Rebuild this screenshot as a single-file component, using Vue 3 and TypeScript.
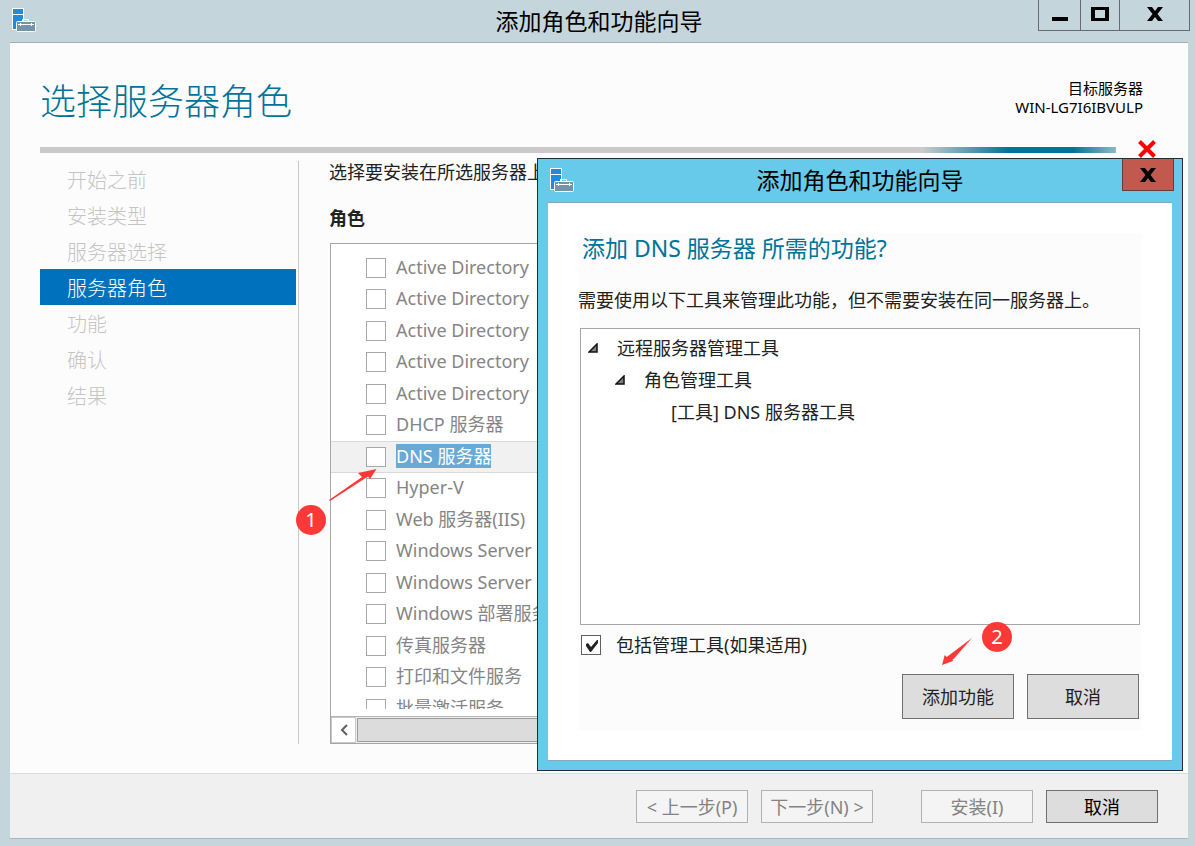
<script setup lang="ts">
import { ref } from 'vue'

interface Role {
  name: string
  checked: boolean
}

const wizardTitle = '添加角色和功能向导'

const steps: string[] = ['开始之前', '安装类型', '服务器选择', '服务器角色', '功能', '确认', '结果']
const currentStep = ref(3)

const roles = ref<Role[]>(
  [
    'Active Directory',
    'Active Directory',
    'Active Directory',
    'Active Directory',
    'Active Directory',
    'DHCP 服务器',
    'DNS 服务器',
    'Hyper-V',
    'Web 服务器(IIS)',
    'Windows Server',
    'Windows Server',
    'Windows 部署服务',
    '传真服务器',
    '打印和文件服务',
    '批量激活服务',
  ].map((name) => ({ name, checked: false })),
)
const selectedRole = ref(6)
const includeTools = ref(true)
</script>

<template>
  <div class="window">
    <header class="titlebar">
      <svg class="app-icon" width="26" height="26" viewBox="0 0 26 26" aria-hidden="true">
        <rect x="1.5" y="1.5" width="11" height="21" fill="#1f8cdb" stroke="#fff" />
        <path d="M2 7.5h10" stroke="#fff" />
        <path d="M11.5 14v-1.500h6V14" fill="none" stroke="#fff" />
        <rect x="5.500" y="14.500" width="19" height="10" rx="1" fill="#7293a8" stroke="#fff" />
        <path d="M7 17.500h16M9.500 16v3M20.500 16v3" stroke="#fff" />
      </svg>
      <h1 class="title">{{ wizardTitle }}</h1>
      <div class="controls">
        <button class="control minimize" type="button" aria-label="最小化">
          <svg width="18" height="16" viewBox="0 0 18 16"><path d="M1 11h16v4H1z" /></svg>
        </button>
        <button class="control" type="button" aria-label="最大化">
          <svg width="18" height="16" viewBox="0 0 18 16">
            <path fill-rule="evenodd" d="M0 1h18v14H0zM4 4v8h10V4z" />
          </svg>
        </button>
        <button class="control wide" type="button" aria-label="关闭">
          <svg width="18" height="16" viewBox="0 0 18 16">
            <path d="M1 1h5l3 4 3-4h5l-5.500 7 5.500 7h-5l-3-4-3 4H1l5.500-7z" />
          </svg>
        </button>
      </div>
    </header>

    <main class="page">
      <div class="page-head">
        <h2 class="page-title">选择服务器角色</h2>
        <p class="target">目标服务器<br />WIN-LG7I6IBVULP</p>
      </div>
      <div class="rule"></div>

      <div class="columns">
        <nav class="steps">
          <button
            v-for="(step, i) in steps"
            :key="step"
            type="button"
            class="step"
            :class="{ active: i === currentStep }"
          >
            {{ step }}
          </button>
        </nav>

        <section class="content">
          <p class="intro">选择要安装在所选服务器上</p>
          <h3 class="label">角色</h3>
          <div class="list">
            <div class="viewport">
              <ul class="roles">
                <li
                  v-for="(role, i) in roles"
                  :key="i"
                  class="role"
                  :class="{ selected: i === selectedRole }"
                >
                  <label class="role-label">
                    <input v-model="role.checked" class="box" type="checkbox" />
                    <span class="role-name">{{ role.name }}</span>
                  </label>
                </li>
              </ul>
            </div>
            <div class="scrollbar">
              <button class="scroll-button" type="button" aria-label="向左滚动">
                <svg width="10" height="12" viewBox="0 0 10 12">
                  <path d="M8 1L3 6l5 5" fill="none" stroke="#606060" stroke-width="2" />
                </svg>
              </button>
              <div class="thumb"></div>
            </div>
          </div>
        </section>
      </div>
    </main>

    <footer class="footer">
      <button class="button" type="button" disabled>&lt; 上一步(P)</button>
      <button class="button" type="button" disabled>下一步(N) &gt;</button>
      <button class="button apart" type="button" disabled>安装(I)</button>
      <button class="button" type="button">取消</button>
    </footer>

    <div class="dialog" role="dialog" :aria-label="wizardTitle">
      <header class="dialog-bar">
        <svg class="dialog-icon" width="26" height="26" viewBox="0 0 26 26" aria-hidden="true">
          <rect x="1.5" y="1.5" width="11" height="21" fill="#1f8cdb" stroke="#fff" />
          <path d="M2 7.5h10" stroke="#fff" />
          <path d="M11.5 14v-1.500h6V14" fill="none" stroke="#fff" />
          <rect x="5.500" y="14.500" width="19" height="10" rx="1" fill="#7293a8" stroke="#fff" />
          <path d="M7 17.500h16M9.500 16v3M20.500 16v3" stroke="#fff" />
        </svg>
        <h2 class="title">{{ wizardTitle }}</h2>
        <button class="dialog-close" type="button" aria-label="关闭">
          <svg width="18" height="16" viewBox="0 0 18 16">
            <path d="M1 1h5l3 4 3-4h5l-5.500 7 5.500 7h-5l-3-4-3 4H1l5.500-7z" />
          </svg>
        </button>
      </header>
      <div class="dialog-body">
        <div class="panel">
          <h3 class="question">添加 DNS 服务器 所需的功能?</h3>
          <p class="note">需要使用以下工具来管理此功能，但不需要安装在同一服务器上。</p>
          <ul class="tree">
            <li class="node">
              <svg class="expander" width="10" height="10" viewBox="0 0 10 10">
                <path d="M9 1v8H1z" fill="#808080" stroke="#111" stroke-width="1.500" />
              </svg>
              远程服务器管理工具
            </li>
            <li class="node level-2">
              <svg class="expander" width="10" height="10" viewBox="0 0 10 10">
                <path d="M9 1v8H1z" fill="#808080" stroke="#111" stroke-width="1.500" />
              </svg>
              角色管理工具
            </li>
            <li class="node level-3">[工具] DNS 服务器工具</li>
          </ul>
          <label class="include">
            <input v-model="includeTools" class="box dark" type="checkbox" />
            包括管理工具(如果适用)
          </label>
          <div class="actions">
            <button class="button tall" type="button">添加功能</button>
            <button class="button tall" type="button">取消</button>
          </div>
        </div>
      </div>
    </div>

    <svg class="mark cross" width="18" height="18" viewBox="0 0 18 18" aria-hidden="true">
      <path d="M1.500 1.500l15 15M16.500 1.500l-15 15" stroke="#fe0000" stroke-width="4" />
    </svg>
    <svg class="mark arrow-one" width="48" height="34" viewBox="0 0 48 34" aria-hidden="true">
      <path d="M0 31L33 8l-4-4L47.500 0l-6.500 10-2-2.500L1 32z" fill="#fd3937" />
    </svg>
    <span class="mark badge one">1</span>
    <svg class="mark arrow-two" width="30" height="28" viewBox="0 0 30 28" aria-hidden="true">
      <path d="M30 0L12 20.500l-1.500 1 .5 1.500L0 27l2.700-10 2 2z" fill="#fd3937" />
    </svg>
    <span class="mark badge two">2</span>
  </div>
</template>

<style>
body {
  margin: 0;
}
</style>

<style scoped>
.window {
  position: relative;
  display: flex;
  flex-direction: column;
  box-sizing: border-box;
  min-height: 100vh;
  padding: 0 7px 7px 10px;
  background: #c4d6dc;
  color: #222;
  font-family: 'Noto Sans', 'Noto Sans CJK SC', sans-serif;
  font-size: 18px;
  line-height: 24px;
}
h1,
h2,
h3,
p,
ul {
  margin: 0;
  padding: 0;
  font-weight: 400;
}
ul {
  list-style: none;
}
button {
  padding: 0;
  font: inherit;
  color: inherit;
}
svg {
  display: block;
}

/* Title bars */
.titlebar {
  position: relative;
  display: flex;
  justify-content: center;
  height: 42px;
  border-bottom: 1px solid #a9a9b8;
}
.title {
  font-size: 23px;
  line-height: 42px;
  color: #000;
}
.app-icon {
  position: absolute;
  left: 1px;
  top: 7px;
}
.controls {
  position: absolute;
  right: -2px;
  top: 0;
  display: flex;
}
.control {
  display: flex;
  justify-content: center;
  align-items: flex-start;
  box-sizing: border-box;
  width: 39px;
  height: 31px;
  padding-top: 6px;
  border: solid #696976;
  border-width: 0 0 1px 1px;
  background: none;
}
.control.minimize {
  width: 42px;
}
.control.wide {
  width: 71px;
  border-right-width: 1px;
}

/* Page */
.page {
  display: flex;
  flex: 1;
  flex-direction: column;
  padding: 0 0 29px 30px;
  background: #fcfcfc;
}
.page-head {
  display: flex;
  justify-content: space-between;
  align-items: flex-start;
  height: 104px;
  padding-right: 45px;
}
.page-title {
  padding-top: 35px;
  font-size: 36px;
  font-weight: 300;
  line-height: 48px;
  color: #00739a;
}
.target {
  padding-top: 36px;
  font-size: 15px;
  line-height: 19px;
  color: #000;
  text-align: right;
}
.rule {
  height: 6px;
  margin-right: 72px;
  background: linear-gradient(90deg, #cacaca 82%, #00739a 90%, #00739a 96%, #8fb9c5 100%);
}
.columns {
  display: flex;
  flex: 1;
  padding-top: 8px;
}
.steps {
  width: 256px;
  padding-right: 2px;
  border-right: 1px solid #c8c8c8;
}
.step {
  display: block;
  box-sizing: border-box;
  width: 256px;
  height: 36px;
  padding: 3px 0 0 27px;
  border: 0;
  background: none;
  color: #c4c4c4;
  font-size: 20px;
  font-weight: 300;
  text-align: left;
}
.step.active {
  background: #0072bd;
  color: #fff;
}
.content {
  display: flex;
  flex: 1;
  flex-direction: column;
  padding: 0 42px 0 31px;
}
.intro {
  margin: -1px 0 22px -1px;
}
.label {
  margin: 0 0 13px -1px;
  font-size: 18px;
  font-weight: 700;
}
.list {
  display: flex;
  flex: 1;
  flex-direction: column;
  border: 1px solid #a6a6a6;
  background: #fff;
}
.viewport {
  height: 457px;
  margin: 8px 0 7px;
  overflow: hidden;
}
.roles {
  display: grid;
  grid-template-rows: repeat(16, 1fr);
  height: 504px;
}
.role {
  display: flex;
  align-items: center;
  box-sizing: border-box;
  padding-left: 35px;
  border: solid transparent;
  border-width: 1px 0;
  color: #858585;
}
.role.selected {
  border-color: #dadada;
  background: #f1f1f1;
}
.role-label {
  display: flex;
  align-items: center;
  gap: 10px;
}
.role-name {
  margin-bottom: 2px;
}
.selected .role-name {
  background: #69a9d6;
  color: #fff;
}
.box {
  box-sizing: border-box;
  width: 20px;
  height: 20px;
  margin: 0;
  border: 1px solid #a8a8a8;
  background: #fff;
  appearance: none;
}
.box.dark {
  border-color: #606060;
}
.box.dark:checked {
  background: #fff
    url("data:image/svg+xml,%3Csvg xmlns='http://www.w3.org/2000/svg' viewBox='0 0 18 18'%3E%3Cpath d='M4 8l2-1 3 4 6-7h1v3L9 16H8L4 10z' fill='%23222'/%3E%3C/svg%3E");
}
.scrollbar {
  display: flex;
  flex: 1;
  border-top: 1px solid #b4b4b4;
  background: #f0f0f0;
}
.scroll-button {
  display: flex;
  justify-content: center;
  align-items: center;
  width: 25px;
  border: 1px solid #c8c8c8;
  background: #fff;
}
.thumb {
  flex: 1;
  margin: 1px;
  border: 1px solid #9c9c9c;
  background: #dcdcdc;
}

/* Footer */
.footer {
  display: flex;
  justify-content: flex-end;
  gap: 13px;
  padding: 16px 30px 15px;
  border-top: 1px solid #dcdcdc;
  border-bottom: 1px solid #aab6c0;
  background: #f0f0f0;
  color: #000;
}
.button {
  width: 112px;
  height: 33px;
  border: 1px solid #707070;
  background: #dddddd;
  white-space: nowrap;
}
.button:disabled {
  border-color: #adb2b5;
  background: #f4f4f4;
  color: #838383;
}
.button.apart {
  margin-left: 35px;
}
.button.tall {
  height: 45px;
}

/* Dialog over the wizard page */
.dialog {
  position: absolute;
  left: 537px;
  right: 12px;
  top: 158px;
  box-sizing: border-box;
  padding: 0 10px 9px;
  border: 1px solid #222d33;
  background: #67caea;
}
.dialog-bar {
  position: relative;
  display: flex;
  justify-content: center;
  height: 43px;
}
.dialog-icon {
  position: absolute;
  left: 1px;
  top: 8px;
}
.dialog-close {
  position: absolute;
  right: -2px;
  top: 0;
  display: flex;
  justify-content: center;
  align-items: center;
  box-sizing: border-box;
  width: 52px;
  height: 32px;
  border: 1px solid #6c3b38;
  border-top: 0;
  background: #c2594f;
}
.dialog-body {
  padding: 30px;
  border: solid #86a9bd;
  border-width: 1px 0;
  background: #fff;
}
.panel {
  padding-bottom: 11px;
  background: #fcfcfc;
}
.question {
  padding-left: 4px;
  font-size: 23px;
  line-height: 30px;
  color: #00739a;
}
.note {
  padding: 25px 0 16px;
  white-space: nowrap;
}
.tree {
  box-sizing: border-box;
  height: 297px;
  margin: 0 2px;
  padding-top: 3px;
  border: 1px solid #a6a6a6;
  background: #fff;
}
.node {
  display: flex;
  align-items: center;
  gap: 19px;
  height: 32px;
  padding-left: 7px;
}
.node.level-2 {
  padding-left: 34px;
}
.node.level-3 {
  padding-left: 90px;
}
.include {
  display: flex;
  align-items: center;
  gap: 15px;
  padding: 8px 3px 17px;
}
.actions {
  display: flex;
  justify-content: flex-end;
  gap: 13px;
  padding-right: 3px;
}

/* Annotations */
.mark {
  position: absolute;
}
.cross {
  left: 1138px;
  top: 140px;
}
.arrow-one {
  left: 329px;
  top: 469px;
}
.arrow-two {
  left: 942px;
  top: 638px;
}
.badge {
  width: 30px;
  height: 30px;
  border-radius: 50%;
  background: #fd3937;
  color: #fff;
  font-size: 20px;
  line-height: 30px;
  text-align: center;
}
.badge.one {
  left: 296px;
  top: 505px;
}
.badge.two {
  left: 982px;
  top: 622px;
}
</style>
